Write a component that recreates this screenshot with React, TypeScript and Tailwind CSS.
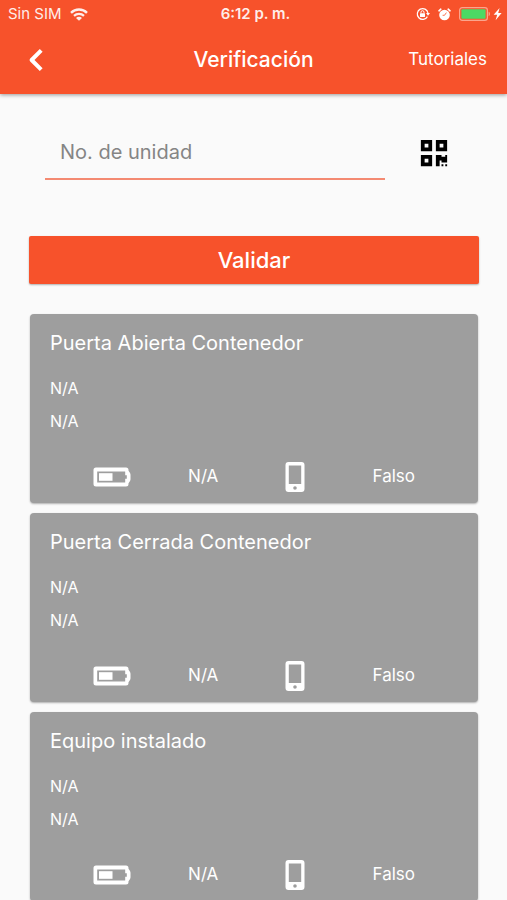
import { useState } from "react";
import { FaQrcode } from "react-icons/fa";

type Check = {
  title: string;
  date: string;
  place: string;
  battery: string;
  mobile: string;
};

const checks: Check[] = [
  "Puerta Abierta Contenedor",
  "Puerta Cerrada Contenedor",
  "Equipo instalado",
].map((title) => ({
  title,
  date: "N/A",
  place: "N/A",
  battery: "N/A",
  mobile: "Falso",
}));

const WifiIcon = () => (
  <svg width="18" height="13" viewBox="0 0 18 13" fill="none" aria-hidden="true">
    <path d="M1 4.8a11.2 11.2 0 0 1 16 0" stroke="currentColor" strokeWidth="2.4" />
    <path d="M4 7.9a7.2 7.2 0 0 1 10 0" stroke="currentColor" strokeWidth="2.2" />
    <path d="M9 12.8 6 9.9a4.2 4.2 0 0 1 6 0z" fill="currentColor" />
  </svg>
);

const RotationLockIcon = () => (
  <svg width="14" height="14" viewBox="0 0 14 14" fill="none" aria-hidden="true">
    <path d="M11.4 9.6A5.4 5.4 0 1 1 12 6" stroke="currentColor" strokeWidth="1.2" />
    <path d="M10 6h4l-2 2.8z" fill="currentColor" />
    <rect x="4" y="6.2" width="5" height="3.8" rx="0.5" fill="currentColor" />
    <path d="M5 6.4V5.2a1.5 1.5 0 0 1 3 0v1.2" stroke="currentColor" strokeWidth="1" />
  </svg>
);

const AlarmIcon = () => (
  <svg width="13" height="13" viewBox="0 0 13 13" fill="none" aria-hidden="true">
    <circle cx="6.5" cy="7" r="5.3" fill="currentColor" />
    <path d="M1 2.8 2.8 1.2M12 2.8 10.2 1.2" stroke="currentColor" strokeWidth="1.6" strokeLinecap="round" />
    <path d="M8.4 4.6 6.5 7.3H4.6" stroke="#f7522b" strokeWidth="0.8" />
  </svg>
);

const ChargingIcon = () => (
  <svg width="44" height="14" viewBox="0 0 44 14" fill="none" aria-hidden="true">
    <rect x="0.6" y="0.6" width="27.8" height="12.8" rx="2.6" stroke="#fba58d" strokeWidth="1.2" />
    <rect x="2.4" y="2.2" width="24.2" height="9.6" rx="1" fill="#4cd964" />
    <path d="M29.6 4.8c1.8.6 1.8 3.8 0 4.4z" fill="#fba58d" />
    <path d="M40.6 1 34.6 7.8h3.6l-1.6 5.4 6-7.2h-3.4z" fill="currentColor" />
  </svg>
);

const BackIcon = () => (
  <svg width="16" height="24" viewBox="0 0 16 24" fill="none" aria-hidden="true">
    <path d="M13.2 2.4 3.6 12l9.6 9.6" stroke="currentColor" strokeWidth="4" strokeLinejoin="round" />
  </svg>
);

const BatteryIcon = () => (
  <svg width="38" height="20" viewBox="0 0 38 20" fill="currentColor" aria-hidden="true">
    <path
      fillRule="evenodd"
      d="M3 .5h30a2.500 2.500 0 0 1 2.500 2.500v.8l1.400 2a4 4 0 0 1 .6 2v4.400a4 4 0 0 1-.6 2l-1.400 2v.8a2.500 2.500 0 0 1-2.500 2.500H3A2.500 2.500 0 0 1 .5 17V3A2.500 2.500 0 0 1 3 .5zM4.200 4.400v11.200h28v-3.800h1.600V8.200h-1.600V4.400z"
    />
    <rect x="6" y="6.2" width="13.5" height="7.6" />
  </svg>
);

const PhoneIcon = () => (
  <svg width="40" height="30" viewBox="-1 0 40 30" fill="currentColor" aria-hidden="true">
    <path
      fillRule="evenodd"
      d="M12.500 0h13a3 3 0 0 1 3 3v24a3 3 0 0 1-3 3h-13a3 3 0 0 1-3-3V3a3 3 0 0 1 3-3zM12.800 3.500v18.500h12.400V3.500zM19 24.200a1.800 1.800 0 1 0 0 3.600 1.800 1.800 0 0 0 0-3.600z"
    />
  </svg>
);

const StatusBar = () => (
  <div className="grid h-7 grid-cols-3 items-center pl-2 pr-1">
    <div className="flex items-center gap-2 text-[15px] opacity-90">
      <span>Sin SIM</span>
      <WifiIcon />
    </div>
    <span className="text-center text-[15px] font-semibold opacity-90">6:12 p. m.</span>
    <div className="flex items-center justify-end gap-2">
      <RotationLockIcon />
      <AlarmIcon />
      <ChargingIcon />
    </div>
  </div>
);

const CheckCard = ({ check }: { check: Check }) => (
  <article className="rounded bg-[#9e9e9e] pt-[13px] pb-2 text-white shadow-[0_1px_2px_rgba(0,0,0,0.3)]">
    <div className="px-5">
      <h2 className="text-xl leading-8">{check.title}</h2>
      <p className="mt-[14px] text-base leading-[30px]">{check.date}</p>
      <p className="mt-[3px] text-base leading-[30px]">{check.place}</p>
    </div>
    <div className="mt-[23px] flex h-9 items-center justify-between px-[63px] text-[17px]">
      <BatteryIcon />
      <span>{check.battery}</span>
      <PhoneIcon />
      <span>{check.mobile}</span>
    </div>
  </article>
);

const App = () => {
  const [unit, setUnit] = useState("");

  return (
    <div className="h-screen overflow-hidden bg-[#fafafa] font-['Inter','Liberation_Sans',sans-serif]">
      {/* Header */}
      <header className="bg-[#f7522b] pb-[2px] text-white shadow-[0_1px_4px_rgba(0,0,0,0.4)]">
        <StatusBar />
        <div className="grid h-16 grid-cols-[1fr_auto_1fr] items-center px-5">
          <button type="button" aria-label="Atrás" className="w-8 pl-2">
            <BackIcon />
          </button>
          <h1 className="text-[21px] font-medium">Verificación</h1>
          <a href="#tutoriales" className="justify-self-end text-[17px]">
            Tutoriales
          </a>
        </div>
      </header>

      <main className="pt-8 pr-7 pl-[29px]">
        {/* Unit number */}
        <div className="flex items-center pr-[30px] pl-4">
          <div className="min-w-0 flex-1">
            <input
              type="text"
              aria-label="No. de unidad"
              placeholder="No. de unidad"
              value={unit}
              onChange={(e) => setUnit(e.target.value)}
              className="block h-[52px] w-full px-[15px] text-xl text-gray-800 outline-none placeholder:text-[#858585]"
            />
            <div className="h-[2px] bg-[#f48a72]" />
          </div>
          <button type="button" aria-label="Escanear código" className="ml-[34px] text-black">
            <FaQrcode size={30} />
          </button>
        </div>

        <button
          type="button"
          className="mt-14 block h-12 w-full rounded-xs bg-[#f7522b] text-[22px] font-medium text-white shadow-[0_1px_2px_rgba(0,0,0,0.3)]"
        >
          Validar
        </button>

        {/* Checks */}
        <div className="mx-px mt-[30px] flex flex-col gap-[10px]">
          {checks.map((check) => (
            <CheckCard key={check.title} check={check} />
          ))}
        </div>
      </main>
    </div>
  );
};

export default App;
